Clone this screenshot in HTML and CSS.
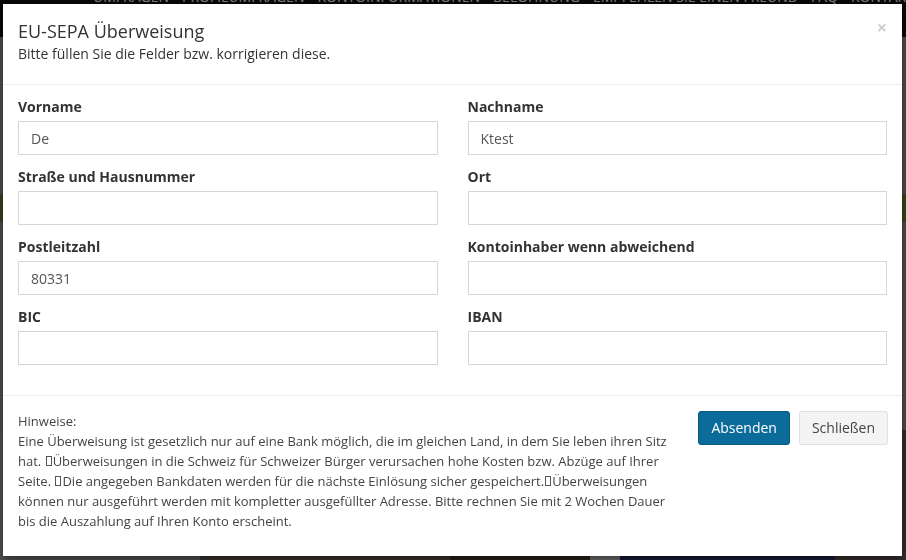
FILE: index.html
```html
<!DOCTYPE html>
<html lang="de">
<head>
  <meta charset="UTF-8" />
  <title>EU-SEPA Überweisung</title>
  <link rel="stylesheet" href="styles.css">
</head>
<body>
  <!-- Seite im Hintergrund -->
  <div class="page">
    <nav class="topnav">
      <a href="#">Umfragen</a>
      <a href="#">Profilumfragen</a>
      <a href="#">Kontoinformationen</a>
      <a href="#">Belohnung</a>
      <a href="#">Empfehlen Sie einen Freund</a>
      <a href="#">FAQ</a>
      <a href="#">Kontakt</a>
    </nav>
    <div class="hero">
      <div class="hero-band"></div>
      <div class="hero-tiles">
        <div class="tile tile-grey"></div>
        <div class="tile tile-brown"></div>
        <div class="tile tile-dark"></div>
        <div class="tile tile-light"></div>
        <div class="tile tile-navy"></div>
        <div class="tile tile-rust"></div>
      </div>
    </div>
  </div>

  <div class="backdrop"></div>

  <!-- Dialog -->
  <div class="modal">
    <div class="modal-header">
      <button class="close" type="button">×</button>
      <h4 class="modal-title">EU-SEPA Überweisung</h4>
      <p class="modal-sub">Bitte füllen Sie die Felder bzw. korrigieren diese.</p>
    </div>

    <div class="modal-body">
      <div class="form-grid">
        <div class="form-group">
          <label>Vorname</label>
          <input type="text" class="form-control" value="De" />
        </div>
        <div class="form-group">
          <label>Nachname</label>
          <input type="text" class="form-control" value="Ktest" />
        </div>
        <div class="form-group">
          <label>Straße und Hausnummer</label>
          <input type="text" class="form-control" value="" />
        </div>
        <div class="form-group">
          <label>Ort</label>
          <input type="text" class="form-control" value="" />
        </div>
        <div class="form-group">
          <label>Postleitzahl</label>
          <input type="text" class="form-control" value="80331" />
        </div>
        <div class="form-group">
          <label>Kontoinhaber wenn abweichend</label>
          <input type="text" class="form-control" value="" />
        </div>
        <div class="form-group">
          <label>BIC</label>
          <input type="text" class="form-control" value="" />
        </div>
        <div class="form-group">
          <label>IBAN</label>
          <input type="text" class="form-control" value="" />
        </div>
      </div>
    </div>

    <div class="modal-footer">
      <p class="hint">Hinweise:<br>Eine Überweisung ist gesetzlich nur auf eine Bank möglich, die im gleichen Land, in dem Sie leben ihren Sitz hat. <span class="tofu"></span>Überweisungen in die Schweiz für Schweizer Bürger verursachen hohe Kosten bzw. Abzüge auf Ihrer Seite. <span class="tofu"></span>Die angegeben Bankdaten werden für die nächste Einlösung sicher gespeichert.<span class="tofu"></span>Überweisungen können nur ausgeführt werden mit kompletter ausgefüllter Adresse. Bitte rechnen Sie mit 2 Wochen Dauer bis die Auszahlung auf Ihren Konto erscheint.</p>
      <div class="actions">
        <button class="btn btn-primary" type="button">Absenden</button>
        <button class="btn btn-default" type="button">Schließen</button>
      </div>
    </div>
  </div>
</body>
</html>
```

FILE: styles.css
```css
/* Grundlayout */
body {
  margin: 0;
  font-family: "Open Sans", "Liberation Sans", sans-serif;
  font-size: 13px;
  color: #333;
  background: #9a9a9a;
  height: 560px;
  overflow: hidden;
  position: relative;
}

/* Hintergrundseite (unter dem Overlay) */
.page {
  height: 100%;
  display: flex;
  flex-direction: column;
}
.topnav {
  background: #111;
  height: 50px;
  display: flex;
  gap: 13px;
  padding-left: 93px;
  margin-top: -13px;
  align-items: flex-start;
  overflow: hidden;
}
.topnav a {
  color: #fff;
  text-decoration: none;
  text-transform: uppercase;
  font-size: 14px;
  line-height: 20px;
  white-space: nowrap;
}
.hero {
  flex: 1;
  display: flex;
  flex-direction: column;
}
.hero-band {
  flex: 1;
  background: linear-gradient(180deg, #9c9c9c 0, #9c9c9c 40%, #6f8a3c 40%, #6f8a3c 47%, #9c9c9c 47%, #9c9c9c 100%);
}
.hero-tiles {
  height: 130px;
  display: flex;
}
.tile { height: 100%; }
.tile-grey  { width: 200px; background: #a4a4a4; }
.tile-brown { width: 250px; background: #74655a; }
.tile-dark  { width: 140px; background: #4a4036; }
.tile-light { width: 30px;  background: #d8d8d8; }
.tile-navy  { width: 215px; background: #2e3670; }
.tile-rust  { flex: 1; background: #6c5c5c; }

.backdrop {
  position: fixed;
  top: 0;
  left: 0;
  width: 100%;
  height: 100%;
  background: rgba(0, 0, 0, 0.5);
}

/* Dialog */
.modal {
  position: absolute;
  top: 4px;
  left: 3px;
  width: 899px;
  background: #fff;
  box-shadow: 0 3px 9px rgba(0, 0, 0, 0.5);
}
.modal-header {
  position: relative;
  padding: 14px 15px 20px;
  border-bottom: 1px solid #eee;
}
.modal-title {
  margin: 0;
  font-size: 18px;
  font-weight: normal;
  line-height: 26px;
  color: #333;
}
.modal-sub {
  margin: 0;
  font-size: 14px;
  line-height: 20px;
  color: #333;
}
.close {
  position: absolute;
  top: 14px;
  right: 15px;
  padding: 0;
  border: 0;
  background: none;
  font-family: "Open Sans", "Liberation Sans", sans-serif;
  font-size: 18px;
  font-weight: bold;
  line-height: 1;
  color: #000;
  opacity: 0.2;
}

.modal-body {
  padding: 12px 15px 18px;
}
.form-grid {
  display: grid;
  grid-template-columns: 1fr 1fr;
  column-gap: 30px;
}
.form-group {
  margin-bottom: 12px;
}
.form-group label {
  display: block;
  font-size: 14px;
  font-weight: bold;
  line-height: 20px;
  margin-bottom: 4px;
  color: #333;
}
.form-control {
  display: block;
  box-sizing: border-box;
  width: 100%;
  height: 34px;
  padding: 6px 12px;
  border: 1px solid #d6d6d6;
  border-radius: 0;
  font-family: "Open Sans", "Liberation Sans", sans-serif;
  font-size: 14px;
  color: #555;
  background: #fff;
}

.modal-footer {
  display: flex;
  align-items: flex-start;
  gap: 15px;
  padding: 15px 14px 15px 15px;
  border-top: 1px solid #eee;
}
.hint {
  flex: 1;
  margin: 0 0 10px;
  font-size: 13px;
  line-height: 20px;
  color: #444;
}
.tofu {
  display: inline-block;
  width: 4px;
  height: 8px;
  border: 1px solid #555;
  margin: 0 1px;
}
.actions {
  display: flex;
  gap: 9px;
  flex: none;
}
.btn {
  font-family: "Open Sans", "Liberation Sans", sans-serif;
  font-size: 14px;
  line-height: 20px;
  padding: 6px 12px;
  border-radius: 3px;
  cursor: pointer;
}
.btn-primary {
  background: #0b6b9b;
  border: 1px solid #08587f;
  color: #fff;
}
.btn-default {
  background: #f4f4f4;
  border: 1px solid #e0e0e0;
  color: #444;
}
```
